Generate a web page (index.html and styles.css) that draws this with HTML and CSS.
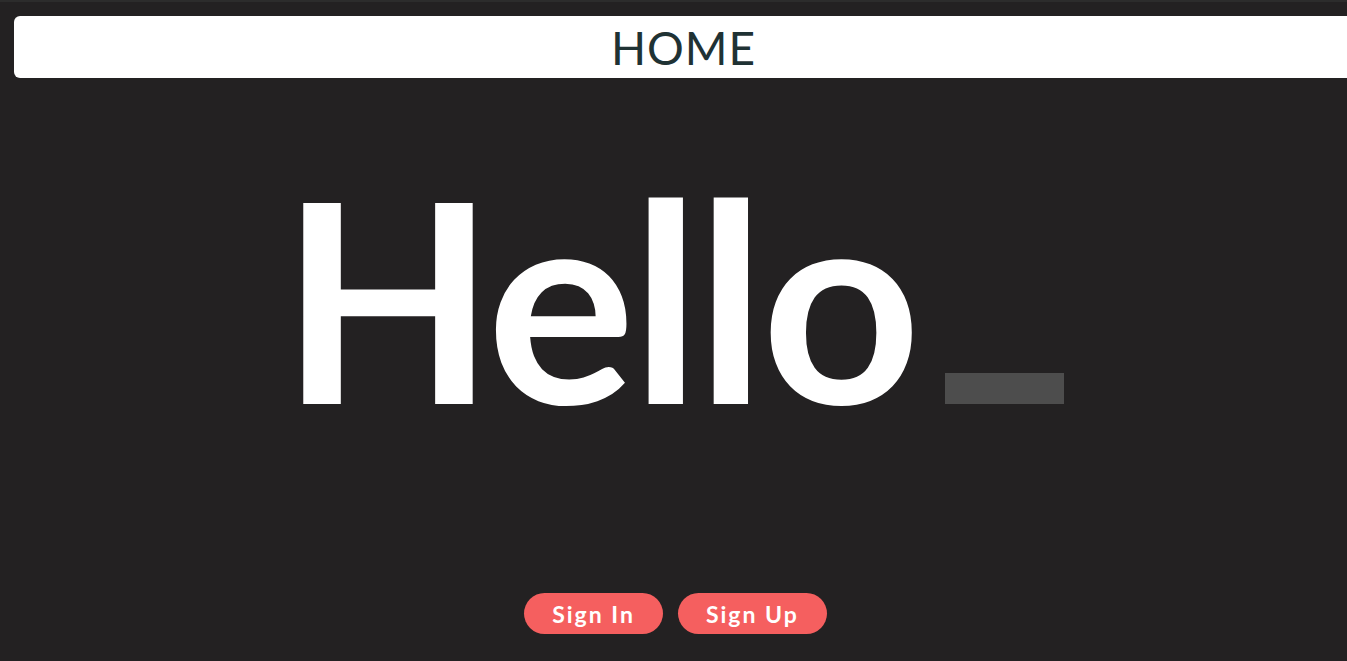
FILE: index.html
```html
<!DOCTYPE html>
<html lang="en">
<head>
<meta charset="utf-8">
<title>Home</title>
<link rel="stylesheet" href="styles.css">
</head>
<body>
<div class="page">
  <header class="topbar">
    <h1 class="title">HOME</h1>
  </header>
  <main class="hero">
    <div class="greeting">
      <span class="word">Hello</span><span class="cursor"></span>
    </div>
  </main>
  <div class="actions">
    <a class="btn" href="#">Sign In</a>
    <a class="btn" href="#">Sign Up</a>
  </div>
</div>
</body>
</html>
```
FILE: styles.css
```css
html, body {
  margin: 0;
  padding: 0;
  background: #232122;
  height: 100%;
  overflow: hidden;
}
.page {
  border-top: 2px solid #2c2c2c;
  height: 659px;
  display: flex;
  flex-direction: column;
  font-family: "Lato", "Liberation Sans", sans-serif;
}
.topbar {
  margin: 14px 0 0 14px;
  height: 62px;
  background: #ffffff;
  border-radius: 6px 0 0 6px;
  display: flex;
  align-items: center;
  justify-content: center;
}
.title {
  margin: 0;
  font-weight: 400;
  font-size: 46px;
  letter-spacing: 1px;
  color: #1f3234;
  line-height: 1;
  padding-top: 2px;
  padding-left: 6px;
}
.hero {
  flex: 1;
  display: flex;
  justify-content: center;
}
.greeting {
  display: flex;
  align-items: flex-end;
  height: 358px;
  padding-right: 2px;
}
.word {
  color: #ffffff;
  font-weight: 700;
  font-size: 278px;
  line-height: 1;
  letter-spacing: -4px;
}
.cursor {
  width: 119px;
  height: 31px;
  background: #4d4d4d;
  margin-left: 28px;
  margin-bottom: 32px;
}
.actions {
  display: flex;
  justify-content: center;
  gap: 15px;
  padding-bottom: 27px;
  padding-left: 4px;
}
.btn {
  display: flex;
  align-items: center;
  justify-content: center;
  height: 41px;
  padding: 0 28px;
  border-radius: 21px;
  background: #f55f5f;
  color: #ffffff;
  font-weight: 700;
  font-size: 23px;
  letter-spacing: 2px;
  text-decoration: none;
}
```
